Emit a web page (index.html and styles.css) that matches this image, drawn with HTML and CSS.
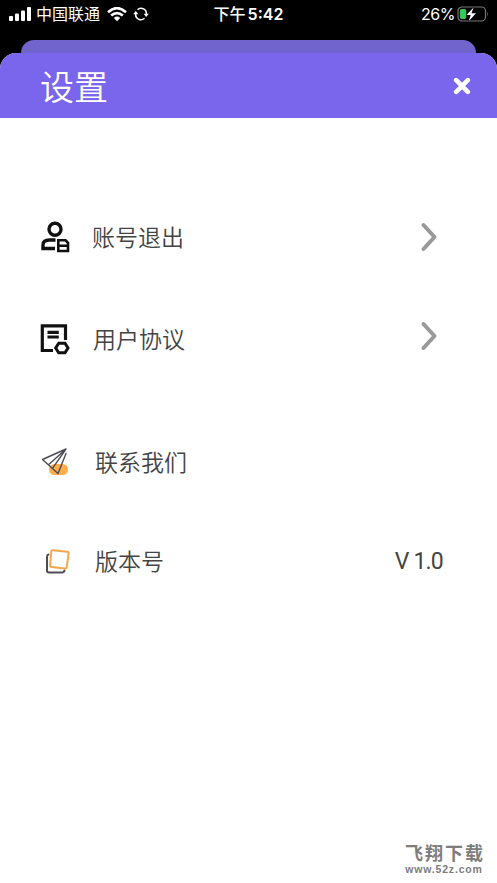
FILE: index.html
```html
<!DOCTYPE html>
<html lang="zh-CN">
<head>
<meta charset="utf-8">
<title>设置</title>
<link rel="stylesheet" href="styles.css">
</head>
<body>
<div class="screen">
  <div class="status">
    <div class="status-left">
      <svg class="signal" width="23" height="16" viewBox="0 0 23 16" fill="#fff"><rect x="0" y="10" width="4" height="5" rx="1"/><rect x="6" y="7.500" width="4" height="7.500" rx="1"/><rect x="12" y="4.500" width="4" height="10.500" rx="1"/><rect x="18" y="1" width="4" height="14" rx="1"/></svg>
      <span class="carrier">中国联通</span>
      <svg class="wifi" width="20" height="15" viewBox="0 0 20 15" fill="none" stroke="#fff" stroke-width="2.700"><path d="M1 5.200Q10-2.800 19 5.200M4.200 8.600Q10 3.600 15.800 8.600"/><path d="M6.800 11Q10 8.200 13.200 11L10 14.300Z" fill="#fff" stroke="none"/></svg>
      <svg class="sync" width="16" height="14" viewBox="0 0 16 14" fill="none" stroke="#fff" stroke-width="1.500"><path d="M4.500 2.700A5.300 5.300 0 0 1 13.300 7.500M11.500 11.300A5.300 5.300 0 0 1 2.700 6.500"/><path d="M10.600 6.700h5.200l-2.600 3.300zM.2 7.300h5.200L2.800 4z" fill="#fff" stroke="none"/></svg>
    </div>
    <div class="time">下午<span>5:42</span></div>
    <div class="status-right">
      <span class="percent">26%</span>
      <svg width="33" height="16" viewBox="0 0 33 16"><rect x="1" y="1" width="27.500" height="14" rx="4" fill="none" stroke="#777" stroke-width="1.200"/><rect x="2.800" y="3" width="6.500" height="10" rx="2" fill="#35c759"/><path d="M30.300 5.500q1.700 2.500 0 5z" fill="#777"/><path d="M16.500 1.500L9.500 9h4.200l-2 6.200L19 7.200h-4.500z" fill="#fff" stroke="#000" stroke-width=".8" paint-order="stroke"/></svg>
    </div>
  </div>
  <div class="back-card"></div>
  <main class="sheet">
    <header class="header">
      <h1>设置</h1>
      <svg width="18" height="18" viewBox="0 0 18 18" fill="none" stroke="#fff" stroke-width="4.600" stroke-linecap="round"><path d="M3.200 3.200l11.600 11.600M14.800 3.200L3.200 14.800"/></svg>
    </header>
    <div class="list">
      <div class="row logout">
        <svg class="icon" width="32" height="32" viewBox="0 0 32 32" fill="none" stroke="#111" stroke-width="3.400"><circle cx="15" cy="8.300" r="6"/><path d="M15.500 19H9.500Q3 19 3 24v3.500H15"/><path d="M18.300 19.300h7.200l2.500 2.500v8.200h-9.700zM18 24.700h10" stroke-width="2.600"/></svg>
        <span class="label">账号退出</span>
        <svg class="chevron" width="18" height="32" viewBox="0 0 18 32"><path d="M3.500 4l11 12-11 12"/></svg>
      </div>
      <div class="row terms">
        <svg class="icon" width="32" height="32" viewBox="0 0 32 32" fill="none" stroke="#111" stroke-width="3.200"><path d="M13 27.500H2.300V2.900H25.500v14.100M7.500 9.300h11.300M7.500 14h11.300"/><path d="M18.700 20.200h6.300l3 4.800-3 4.800h-6.300l-3-4.800z" stroke-width="3"/></svg>
        <span class="label">用户协议</span>
        <svg class="chevron" width="18" height="32" viewBox="0 0 18 32"><path d="M3.500 4l11 12-11 12"/></svg>
      </div>
      <div class="row contact">
        <svg class="icon" width="32" height="32" viewBox="0 0 32 32" fill="none" stroke="#4c4c57" stroke-width="1.400" stroke-linejoin="round" stroke-linecap="round"><rect x="9" y="18" width="19" height="11" rx="5.500" fill="#ffac49" stroke="none"/><path d="M26 3L2.500 13.500 18 27.500 26 7.500M26 3L8.500 18.800M26 3L12.500 22.300"/></svg>
        <span class="label">联系我们</span>
      </div>
      <div class="row version">
        <svg class="icon" width="32" height="32" viewBox="0 0 32 32" fill="none" stroke-linecap="round"><path d="M8.500 9.500Q7 9.800 7 12v13.500q0 2 2 2h13q2 0 2.500-2" stroke="#4c4c57" stroke-width="2"/><path d="M13 5.200l14 1.500q1.800.2 1.600 2l-1.800 13.200q-.2 1.800-2 1.600l-13-1.400q-1.800-.2-1.600-2L11.200 6.800Q11.400 5 13 5.200z" fill="#fff" stroke="#f5a64c" stroke-width="2"/></svg>
        <span class="label">版本号</span>
        <span class="value">V 1.0</span>
      </div>
    </div>
    <footer class="mark"><div class="mark-name">飞翔下载</div><div class="mark-url">www.52z.com</div></footer>
  </main>
</div>
</body>
</html>
```
FILE: styles.css
```css
* { box-sizing: border-box; }
body { margin: 0; background: #000; font-family: "Liberation Sans", "Noto Sans CJK SC", sans-serif; }
.screen { width: 497px; height: 883px; display: flex; flex-direction: column; overflow: hidden; background: #000; }
.status { height: 40px; flex: none; display: grid; grid-template-columns: 1fr auto 1fr; padding: 0 7px 12px 9px; align-items: center; color: #fff; font: 16px/28px Inter, "Noto Sans CJK SC", sans-serif; }
.status-left, .status-right { display: flex; align-items: center; }
.status-right { justify-content: flex-end; gap: 2px; }
.percent { letter-spacing: -.5px; }
.carrier { margin-left: 4px; }
.wifi { margin-left: 7px; }
.sync { margin-left: 6px; }
.time { font-weight: 500; white-space: nowrap; margin-right: 2px; }
.time span { margin-left: 2px; font-weight: 600; }
.back-card { height: 13px; flex: none; margin: 0 21px; background: #7165cd; border-radius: 13px 13px 0 0; }
.sheet { flex: 1; display: flex; flex-direction: column; background: #fff; border-radius: 16px 16px 0 0; overflow: hidden; }
.header { height: 65px; flex: none; background: #7a66ec; display: flex; align-items: center; justify-content: space-between; padding: 0 26px 0 40px; }
h1 { margin: 0; color: #fff; font: 350 34px/65px "Noto Sans CJK SC", sans-serif; }
.list { flex: 1; padding: 94px 54px 0 40px; }
.row { height: 50px; display: flex; align-items: center; color: #444; }
.icon, .chevron { flex: none; }
.label { font: 350 23px/50px "Noto Sans CJK SC", sans-serif; margin: 0 0 2px 20px; }
.terms { margin-top: 52px; }
.terms .label { margin-left: 21px; }
.contact { margin-top: 73px; }
.contact .label, .version .label { margin-left: 23px; }
.version { margin-top: 49px; }
.chevron { margin: 0 5px 0 auto; fill: none; stroke: #999; stroke-width: 4; stroke-linecap: round; stroke-linejoin: round; }
.terms .chevron { margin-bottom: 6px; }
.value { margin: 2px 0 0 auto; font: 23px/50px Roboto, sans-serif; letter-spacing: -.8px; }
.mark { align-self: flex-end; margin: 0 14px 9px 0; color: #7d7d7d; text-align: center; }
.mark-name { font: 700 18px/20px "Noto Sans CJK SC", sans-serif; letter-spacing: 2px; margin: 0 -2px 2px 0; }
.mark-url { font: 700 10.5px/10px "Liberation Sans", sans-serif; letter-spacing: .8px; }
```
